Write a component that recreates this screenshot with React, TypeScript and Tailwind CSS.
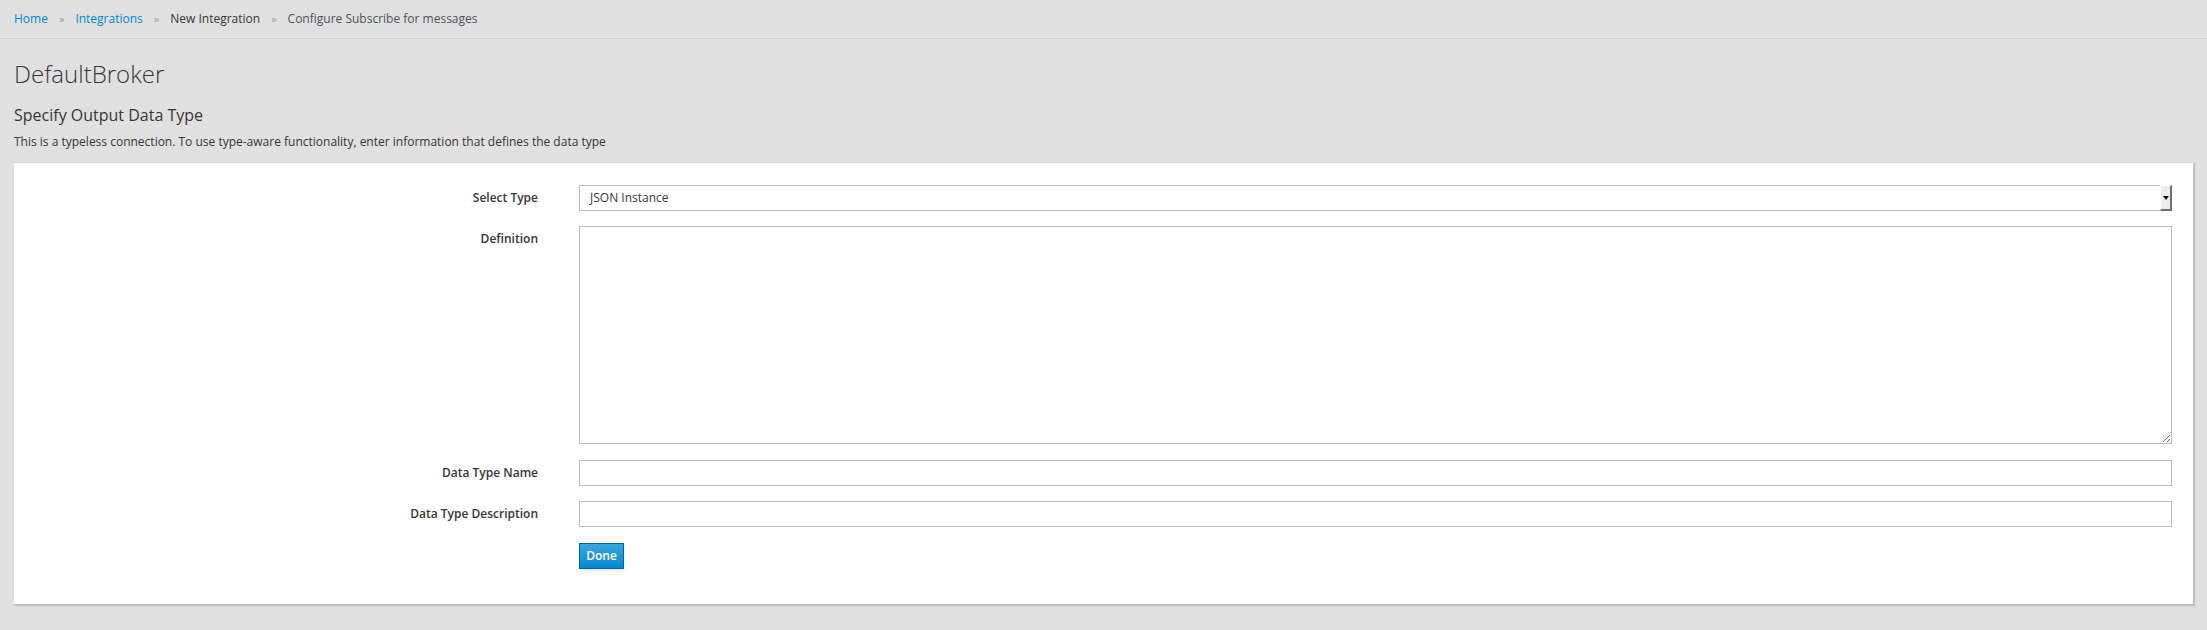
import React from 'react';

const crumbs = [
  { label: 'Home', link: true },
  { label: 'Integrations', link: true },
  { label: 'New Integration', link: false },
  { label: 'Configure Subscribe for messages', link: false, muted: true },
];

type FieldRowProps = {
  label: string;
  children: React.ReactNode;
  className?: string;
};

const FieldRow: React.FC<FieldRowProps> = ({ label, children, className }) => (
  <div className={`flex items-start ${className ?? ''}`}>
    <label className="w-[524px] h-[26px] flex items-center justify-end text-[12px] font-semibold text-[#363636] shrink-0">
      {label}
    </label>
    <div className="ml-[41px] flex-1">{children}</div>
  </div>
);

const SelectBox = () => (
  <div className="h-[26px] flex items-stretch border border-[#bbbbbb] bg-white">
    <div className="flex-1 flex items-center pl-[10px] text-[12px] text-[#363636]">
      JSON Instance
    </div>
    <div className="w-[12px] -my-px -mr-px flex items-center justify-center bg-[#ececec] border-t border-l border-white border-r-2 border-b-2 border-r-[#707070] border-b-[#707070]">
      <svg width="6" height="4" viewBox="0 0 6 4">
        <path d="M0 0h6L3 4z" fill="#111" />
      </svg>
    </div>
  </div>
);

export default function App() {
  return (
    <div className="min-h-[630px] bg-[#e0e0e0] font-['Open_Sans',sans-serif] text-[#363636]">
      <div className="h-[39px] border-b border-[#d1d1d1] flex items-center pl-[14px] text-[12px]">
        {crumbs.map((c, i) => (
          <React.Fragment key={c.label}>
            {i > 0 && (
              <span className="mx-[11px] text-[11px] text-[#9c9c9c]">»</span>
            )}
            <span
              className={
                c.link
                  ? 'text-[#0088ce]'
                  : c.muted
                    ? 'text-[#4d5258]'
                    : 'text-[#363636]'
              }
            >
              {c.label}
            </span>
          </React.Fragment>
        ))}
      </div>

      <div className="px-[14px] pt-[22px]">
        <h1 className="text-[24px] leading-[26px] font-light text-[#363636]">
          DefaultBroker
        </h1>
        <h2 className="mt-[18px] text-[16px] leading-[20px] text-[#363636]">
          Specify Output Data Type
        </h2>
        <p className="mt-[9px] text-[12px] leading-[16px] text-[#363636]">
          This is a typeless connection. To use type-aware functionality, enter
          information that defines the data type
        </p>

        <div className="mt-[13px] bg-white pt-[22px] pb-[35px] pr-[21px] shadow-[1px_1px_1px_1px_rgba(0,0,0,0.14)]">
          <FieldRow label="Select Type">
            <SelectBox />
          </FieldRow>
          <FieldRow label="Definition" className="mt-[15px]">
            <textarea
              className="block w-full h-[218px] border border-[#bbbbbb] bg-white text-[12px] outline-none"
              defaultValue=""
            />
          </FieldRow>
          <FieldRow label="Data Type Name" className="mt-[16px]">
            <input
              className="block w-full h-[26px] border border-[#bbbbbb] bg-white text-[12px] px-[6px] outline-none"
              defaultValue=""
            />
          </FieldRow>
          <FieldRow label="Data Type Description" className="mt-[15px]">
            <input
              className="block w-full h-[26px] border border-[#bbbbbb] bg-white text-[12px] px-[6px] outline-none"
              defaultValue=""
            />
          </FieldRow>
          <div className="mt-[15px] pl-[565px]">
            <button className="h-[26px] w-[45px] border border-[#00659c] bg-gradient-to-b from-[#39a5dc] to-[#0088ce] text-white text-[12px] font-semibold shadow-[0_2px_3px_rgba(3,3,3,0.1)]">
              Done
            </button>
          </div>
        </div>
      </div>
    </div>
  );
}
